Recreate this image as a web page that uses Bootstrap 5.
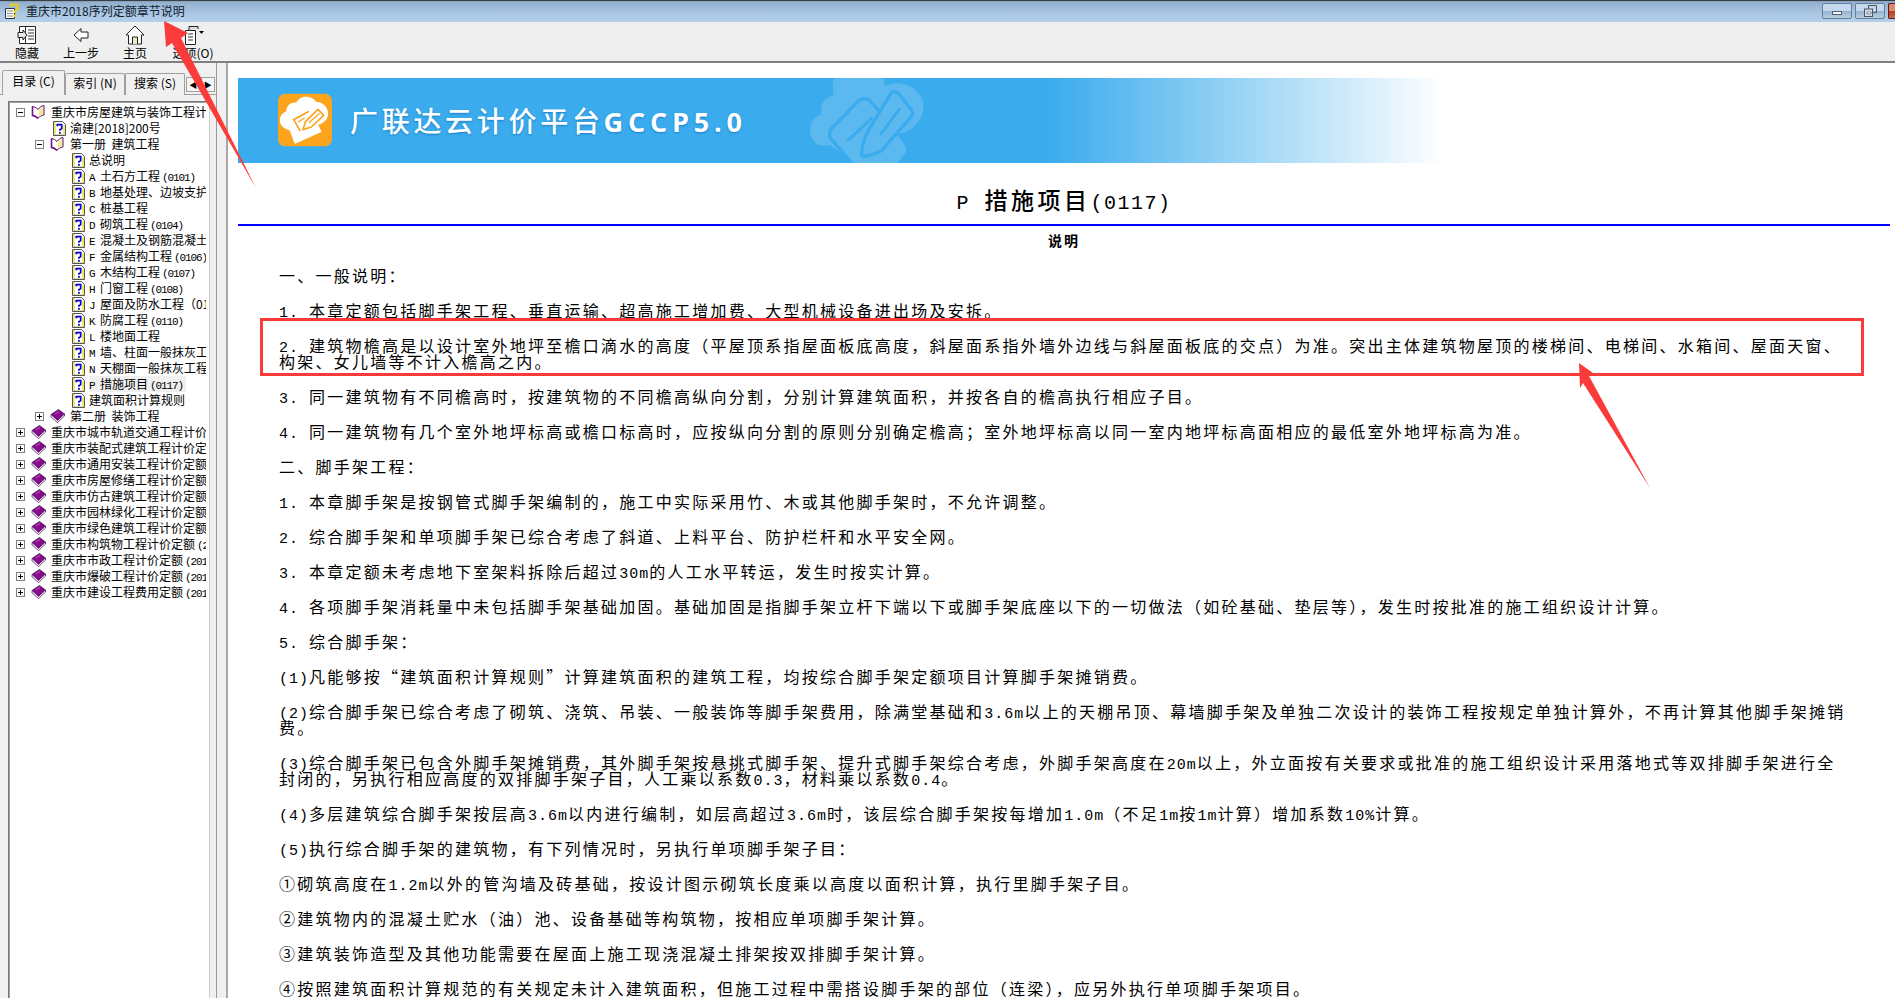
<!DOCTYPE html>
<html lang="zh-CN">
<head>
    <meta charset="UTF-8">
    <meta name="viewport" content="width=device-width, initial-scale=1.0">
    <title>重庆市2018序列定额章节说明</title>
    <link href="https://cdn.jsdelivr.net/npm/bootstrap@5.3.0/dist/css/bootstrap.min.css" rel="stylesheet">
    <style>
        html, body { height: 100%; overflow: hidden; }
        body {
            background: #fff;
            color: #000;
            font-family: "Noto Sans CJK SC", "Liberation Sans", sans-serif;
            font-size: 12px;
        }
        .help-win { width: 1895px; height: 998px; }

        /* title bar */
        .title-bar {
            height: 22px;
            background: linear-gradient(#8eaccb, #a9c6e3 60%, #b4d0ea);
            box-shadow: inset 0 2px 1px -1px #333;
        }
        .title-text { font-size: 12px; color: #14202c; margin-left: 7px; }
        .win-btn {
            width: 30px; height: 16px; margin-left: 3px;
            border: 1px solid #6a7d96; border-radius: 2px;
            background: linear-gradient(#c4d9ee 50%, #94b1cd 50%, #b6cfe6);
        }
        .win-btn.is-close {
            width: 7px;
            border-color: #5a1a1a;
            background: linear-gradient(#dd8a72 50%, #b8391c 50%, #cc6a50);
            border-right: 0; border-radius: 2px 0 0 2px;
        }
        .win-min { width: 10px; height: 4px; background: #f4f6f8; border: 1px solid #555e6c; }

        /* toolbar */
        .tool-bar {
            height: 41px;
            background: #efefef;
            border-bottom: 2px solid #7f7f7f;
        }
        .tool-item { width: 54px; line-height: 14px; padding-top: 3px; color: #000; }
        .tool-item svg { height: 20px; display: block; margin-bottom: 1px; }

        /* left pane */
        .side-pane { width: 226px; background: #f0f0f0; }
        .side-inner { width: 217px; padding-top: 7px; border-right: 1px solid #9a9a9a; }
        .side-tabs { padding-left: 2px; height: 25px; border-bottom: 1px solid #a0a0a0; flex-wrap: nowrap; }
        .side-tabs .nav-link {
            height: 22px; margin-top: 3px; padding: 1px 0 0; width: 60px;
            font-size: 12px; line-height: 15px; color: #000; text-align: center;
            background: #f0f0f0;
            border: 1px solid #a0a0a0; border-bottom: 0; border-radius: 2px 2px 0 0;
        }
        .side-tabs .nav-link.active { height: 25px; margin-top: 0; width: 63px; padding-top: 2px; background: #f0f0f0; border-color: #a0a0a0; }
        .tab-scroll { width: 29px; height: 15px; margin: 7px 0 0 1px; }
        .tab-scroll span {
            flex: 1; border: 1px solid #a0a0a0; background: #f4f4f4;
            font-size: 8px; line-height: 13px; text-align: center; color: #000;
        }
        .tree-box {
            margin: 6px 6px 0 8px;
            height: 900px;
            background: #fff;
            border: 1px solid #777;
            border-right-color: #ccc;
            box-shadow: inset 1px 1px 0 #a0a0a0;
            overflow: hidden;
            padding-top: 2px;
        }
        .tree-row { height: 16px; line-height: 16px; white-space: nowrap; overflow: hidden; display: flex; align-items: center; }
        .tree-row svg { flex: none; }
        .tree-row > span { overflow: hidden; min-width: 0; margin-right: 3px; }
        .lv0 { padding-left: 7px; }
        .lv1 { padding-left: 26px; }
        .leaf1 { padding-left: 44px; }
        .leaf2 { padding-left: 63px; }
        .pm-box { width: 9px; height: 9px; margin-right: 6px; }
        .ico-book { width: 15px; height: 14px; margin-right: 5px; }
        .ico-help { width: 13px; height: 15px; margin-right: 4px; }
        .tree-row > .tree-sel { background: #f0f0f0; padding-right: 3px; }
        .tl { font-family: "Liberation Mono", monospace; font-size: 11px; line-height: 0; white-space: pre; letter-spacing: -1.100px; }
        .tn { margin-left: 2px; }

        /* content */
        .doc-pane {
            flex: 1;
            min-width: 0;
            border-left: 2px solid #a8a8a8;
            padding: 15px 5px 0 10px;
            overflow: hidden;
        }
        .doc-banner {
            height: 85px;
            background: linear-gradient(90deg, #3aabec 0, #3aabec 49%, #ffffff 73%);
            overflow: hidden;
        }
        .banner-logo { width: 54px; height: 54px; margin: 15px 18px 0 40px; flex: none; }
        .banner-text {
            width: 460px; flex: none;
            margin-top: 22px;
            font-size: 28px; line-height: 40px; font-weight: 500;
            letter-spacing: 3.700px; color: #fff; white-space: nowrap;
            text-shadow: 0 1px 2px #1c7fc8;
        }
        .banner-text b { font-family: "Open Sans", sans-serif; font-weight: 700; font-size: 27px; letter-spacing: 4.800px; }
        .banner-mark { width: 130px; height: 85px; flex: none; }
        .doc-title {
            margin: 23px 0 0;
            height: 40px; line-height: 26px;
            border-bottom: 2px solid #0000ff;
            font-size: 23px; font-weight: 500; letter-spacing: 3.500px;
            text-align: center;
        }
        .doc-title span { font-family: "Liberation Mono", monospace; font-size: 20px; letter-spacing: 1.500px; line-height: 0; }
        .title-code { margin-right: 6px; }
        .doc-sub { margin: 6px 0 19px; font-size: 14px; line-height: 16px; font-weight: 700; letter-spacing: 2px; text-align: center; }
        .doc-body { padding-left: 41px; }
        .doc-body p {
            margin: 0 0 19px;
            font-size: 16px; line-height: 16px; letter-spacing: 2.250px;
            white-space: nowrap;
        }
        .doc-body i { font-style: normal; font-family: "Liberation Mono", monospace; font-size: 15px; line-height: 0; letter-spacing: 1px; white-space: pre; }

        .mark-layer { position: absolute; left: 0; top: 0; pointer-events: none; }
    </style>
</head>
<body>
<svg width="0" height="0" class="position-absolute">
    <symbol id="pm-plus" viewBox="0 0 9 9"><rect x=".5" y=".5" width="8" height="8" fill="#fff" stroke="#808080"/><path d="M2 4.500h5M4.500 2v5" stroke="#000"/></symbol>
    <symbol id="pm-minus" viewBox="0 0 9 9"><rect x=".5" y=".5" width="8" height="8" fill="#fff" stroke="#808080"/><path d="M2 4.500h5" stroke="#000"/></symbol>
    <symbol id="help" viewBox="0 0 13 15">
        <path d="M.5.5h9l3 3v11H.5z" fill="#fff" stroke="#555"/>
        <path d="M1 1h2v13H1z" fill="#f4e96a"/><path d="M10 4h2v10h-2z" fill="#f4e96a"/><path d="M1 13h11v1H1z" fill="#d8d8a0"/>
        <path d="M4.300 5.200V3.600h4.400v4L6.900 8.800v1" fill="none" stroke="#0000d0" stroke-width="1.700"/><path d="M6 11h1.800v1.800H6z" fill="#0000d0"/>
    </symbol>
    <symbol id="book-open" viewBox="0 0 15 14">
        <path d="M1.500 1.500c2 .3 4 1.300 5.500 3 1.500-2.200 3.500-3.500 6-4v9.500c-2.500.5-4.500 1.500-6 3-1.500-1.500-3.500-2.500-5.500-3z" fill="#fff" stroke="#5a0a6a"/>
        <path d="M8 5l4-3v7l-4 2.500z" fill="#f0e88a"/><path d="M1.500 1.500v9c2 .5 4 1.500 5.500 3" fill="none" stroke="#7b0f8b" stroke-width="1.600"/>
    </symbol>
    <symbol id="book" viewBox="0 0 15 14">
        <path d="M1 5.500L8.500.5l6 4.500-7 6.500z" fill="#8a0a8e" stroke="#3a0a4a" stroke-width=".7"/>
        <path d="M1 5.500l6.500 6 7-6.500v2l-7 6.500-6.500-5.500z" fill="#fff" stroke="#3a0a4a" stroke-width=".7"/>
        <path d="M5 5l4-2.500" stroke="#c060c0"/>
    </symbol>
</svg>

<div class="help-win position-relative d-flex flex-column">
    <div class="title-bar d-flex align-items-center flex-shrink-0">
        <svg width="16" height="17" viewBox="0 0 16 17" class="ms-1 flex-shrink-0" style="margin-right:-1px">
            <path d="M1.500 5.500h9v10h-9z" fill="#fff" stroke="#333"/><path d="M3 8h6M3 10.500h6M3 13h6" stroke="#888"/>
            <path d="M7 4V1.500h6.500v5L11 8v2" fill="none" stroke="#e6d21e" stroke-width="2.200"/><path d="M10 11.500h2.500V14H10z" fill="#e6d21e"/>
        </svg>
        <span class="title-text">重庆市2018序列定额章节说明</span>
        <div class="ms-auto d-flex align-items-center">
            <div class="win-btn d-flex align-items-center justify-content-center"><div class="win-min mt-1"></div></div>
            <div class="win-btn d-flex align-items-center justify-content-center">
                <svg width="13" height="12" viewBox="0 0 13 12"><path d="M4.500 3.500v-3h8v7h-3" fill="none" stroke="#4a5464"/><rect x=".5" y="4" width="8" height="7.500" fill="#d0deec" stroke="#4a5464"/><path d="M3 7h4v2H3z" fill="#fff" stroke="#4a5464" stroke-width=".6"/></svg>
            </div>
            <div class="win-btn is-close"></div>
        </div>
    </div>

    <div class="tool-bar d-flex flex-shrink-0">
        <div class="tool-item d-flex flex-column align-items-center">
            <svg width="20" height="20" viewBox="0 0 20 20"><path d="M2.500 1.500h16v17h-16z" fill="#fff" stroke="#222"/><path d="M8.500 1.500v17M11 5h6M11 8h6M11 11h6M11 14h6" stroke="#333"/><path d="M1 7.500h5V5l4 5-4 5v-2.500H1z" fill="#e8e8e8" stroke="#222"/></svg>
            <span>隐藏</span>
        </div>
        <div class="tool-item d-flex flex-column align-items-center">
            <svg width="20" height="20" viewBox="0 0 20 20"><path d="M3 10l7-6.500V7h7v6h-7v3.500z" fill="#fff" stroke="#222"/></svg>
            <span>上一步</span>
        </div>
        <div class="tool-item d-flex flex-column align-items-center">
            <svg width="20" height="20" viewBox="0 0 20 20"><path d="M10 1L1 10h2.500v9h13v-9H19z" fill="#fff" stroke="#222"/><path d="M7.500 19v-7h5v7" fill="#efe6c8" stroke="#222"/></svg>
            <span>主页</span>
        </div>
        <div class="tool-item d-flex flex-column align-items-center ms-1">
            <svg width="21" height="20" viewBox="0 0 21 20"><path d="M2.500 5.500h10v14h-10z" fill="#fff" stroke="#222"/><path d="M5 9h5M5 12h5M5 15h5" stroke="#333"/><path d="M6 5V1.500h9V4" fill="#ddd" stroke="#222"/><path d="M16 6h5l-2.500 3z" fill="#000"/></svg>
            <span>选项(O)</span>
        </div>
    </div>

    <div class="d-flex flex-grow-1" style="min-height:0">
        <div class="side-pane flex-shrink-0">
            <div class="side-inner h-100">
                <ul class="nav side-tabs">
                    <li class="nav-item"><a class="nav-link active" href="#">目录 (C)</a></li>
                    <li class="nav-item"><a class="nav-link" href="#">索引 (N)</a></li>
                    <li class="nav-item"><a class="nav-link" href="#">搜索 (S)</a></li>
                    <li class="tab-scroll d-flex"><span>◀</span><span>▶</span></li>
                </ul>
                <ul class="tree-box list-unstyled">
                    <li class="tree-row lv0"><svg class="pm-box"><use href="#pm-minus"/></svg><svg class="ico-book"><use href="#book-open"/></svg><span>重庆市房屋建筑与装饰工程计</span></li>
                    <li class="tree-row leaf1"><svg class="ico-help"><use href="#help"/></svg><span>渝建[2018]200号</span></li>
                    <li class="tree-row lv1"><svg class="pm-box"><use href="#pm-minus"/></svg><svg class="ico-book"><use href="#book-open"/></svg><span>第一册&nbsp;&nbsp;建筑工程</span></li>
                    <li class="tree-row leaf2"><svg class="ico-help"><use href="#help"/></svg><span>总说明</span></li>
                    <li class="tree-row leaf2"><svg class="ico-help"><use href="#help"/></svg><span><span class="tl">A </span>土石方工程<span class="tl tn">(0101)</span></span></li>
                    <li class="tree-row leaf2"><svg class="ico-help"><use href="#help"/></svg><span><span class="tl">B </span>地基处理、边坡支护</span></li>
                    <li class="tree-row leaf2"><svg class="ico-help"><use href="#help"/></svg><span><span class="tl">C </span>桩基工程</span></li>
                    <li class="tree-row leaf2"><svg class="ico-help"><use href="#help"/></svg><span><span class="tl">D </span>砌筑工程<span class="tl tn">(0104)</span></span></li>
                    <li class="tree-row leaf2"><svg class="ico-help"><use href="#help"/></svg><span><span class="tl">E </span>混凝土及钢筋混凝土</span></li>
                    <li class="tree-row leaf2"><svg class="ico-help"><use href="#help"/></svg><span><span class="tl">F </span>金属结构工程<span class="tl tn">(0106)</span></span></li>
                    <li class="tree-row leaf2"><svg class="ico-help"><use href="#help"/></svg><span><span class="tl">G </span>木结构工程<span class="tl tn">(0107)</span></span></li>
                    <li class="tree-row leaf2"><svg class="ico-help"><use href="#help"/></svg><span><span class="tl">H </span>门窗工程<span class="tl tn">(0108)</span></span></li>
                    <li class="tree-row leaf2"><svg class="ico-help"><use href="#help"/></svg><span><span class="tl">J </span>屋面及防水工程（01</span></li>
                    <li class="tree-row leaf2"><svg class="ico-help"><use href="#help"/></svg><span><span class="tl">K </span>防腐工程<span class="tl tn">(0110)</span></span></li>
                    <li class="tree-row leaf2"><svg class="ico-help"><use href="#help"/></svg><span><span class="tl">L </span>楼地面工程</span></li>
                    <li class="tree-row leaf2"><svg class="ico-help"><use href="#help"/></svg><span><span class="tl">M </span>墙、柱面一般抹灰工</span></li>
                    <li class="tree-row leaf2"><svg class="ico-help"><use href="#help"/></svg><span><span class="tl">N </span>天棚面一般抹灰工程</span></li>
                    <li class="tree-row leaf2"><svg class="ico-help"><use href="#help"/></svg><span class="tree-sel"><span class="tl">P </span>措施项目<span class="tl tn">(0117)</span></span></li>
                    <li class="tree-row leaf2"><svg class="ico-help"><use href="#help"/></svg><span>建筑面积计算规则</span></li>
                    <li class="tree-row lv1"><svg class="pm-box"><use href="#pm-plus"/></svg><svg class="ico-book"><use href="#book"/></svg><span>第二册&nbsp;&nbsp;装饰工程</span></li>
                    <li class="tree-row lv0"><svg class="pm-box"><use href="#pm-plus"/></svg><svg class="ico-book"><use href="#book"/></svg><span>重庆市城市轨道交通工程计价</span></li>
                    <li class="tree-row lv0"><svg class="pm-box"><use href="#pm-plus"/></svg><svg class="ico-book"><use href="#book"/></svg><span>重庆市装配式建筑工程计价定</span></li>
                    <li class="tree-row lv0"><svg class="pm-box"><use href="#pm-plus"/></svg><svg class="ico-book"><use href="#book"/></svg><span>重庆市通用安装工程计价定额</span></li>
                    <li class="tree-row lv0"><svg class="pm-box"><use href="#pm-plus"/></svg><svg class="ico-book"><use href="#book"/></svg><span>重庆市房屋修缮工程计价定额</span></li>
                    <li class="tree-row lv0"><svg class="pm-box"><use href="#pm-plus"/></svg><svg class="ico-book"><use href="#book"/></svg><span>重庆市仿古建筑工程计价定额</span></li>
                    <li class="tree-row lv0"><svg class="pm-box"><use href="#pm-plus"/></svg><svg class="ico-book"><use href="#book"/></svg><span>重庆市园林绿化工程计价定额</span></li>
                    <li class="tree-row lv0"><svg class="pm-box"><use href="#pm-plus"/></svg><svg class="ico-book"><use href="#book"/></svg><span>重庆市绿色建筑工程计价定额</span></li>
                    <li class="tree-row lv0"><svg class="pm-box"><use href="#pm-plus"/></svg><svg class="ico-book"><use href="#book"/></svg><span>重庆市构筑物工程计价定额<span class="tl tn">(2</span></span></li>
                    <li class="tree-row lv0"><svg class="pm-box"><use href="#pm-plus"/></svg><svg class="ico-book"><use href="#book"/></svg><span>重庆市市政工程计价定额<span class="tl tn">(201</span></span></li>
                    <li class="tree-row lv0"><svg class="pm-box"><use href="#pm-plus"/></svg><svg class="ico-book"><use href="#book"/></svg><span>重庆市爆破工程计价定额<span class="tl tn">(201</span></span></li>
                    <li class="tree-row lv0"><svg class="pm-box"><use href="#pm-plus"/></svg><svg class="ico-book"><use href="#book"/></svg><span>重庆市建设工程费用定额<span class="tl tn">(201</span></span></li>
                </ul>
            </div>
        </div>

        <div class="doc-pane">
            <div class="doc-banner d-flex">
                <svg class="banner-logo" viewBox="25 25 162 158">
                    <rect x="25" y="25" width="162" height="158" rx="22" fill="#fca41e"/>
                    <path d="M60 135C40 130 25 115 32 95c4-10 13-15 18-17 0-18 15-28 30-26 10-22 45-24 60-2 20-2 38 20 35 40-3 18-20 28-35 30z" fill="#fff"/>
                    <path d="M50 100l70-30 32 68-75 34z" fill="#fff" stroke="#fff" stroke-width="6" stroke-linejoin="round"/>
                    <path d="M92 137L72 103l46-25" fill="none" stroke="#fca41e" stroke-width="5"/>
                    <path d="M85 110l20-12" stroke="#fca41e" stroke-width="4"/>
                    <path d="M100 133l8-25 37-36 17 18-37 35z" fill="#fff" stroke="#fca41e" stroke-width="5" stroke-linejoin="round"/>
                    <path d="M118 112l32-28" stroke="#fca41e" stroke-width="4"/>
                </svg>
                <div class="banner-text">广联达云计价平台<b>GCCP5.0</b></div>
                <svg class="banner-mark" viewBox="0 9 390 255">
                    <path d="M75 0C65 30 68 50 72 60 45 65 28 90 35 118 10 125-5 150 2 180c6 25 28 38 58 30l35 25 40 41h120l30-41c7-10 3-20-5-30l-25-35 20 5c45-15 70-50 65-90-10-45-60-75-115-53L218 0z" fill="#5cb9f0"/>
                    <path d="M205 105l-25-27c-10-10-25-10-35 0L65 160c-10 12-7 20-3 30l68 80" fill="none" stroke="#3aabec" stroke-width="10" stroke-linecap="round"/>
                    <path d="M115 195l70-65" stroke="#3aabec" stroke-width="9" stroke-linecap="round"/>
                    <path d="M240 60c5-12 18-12 25-5l40 50c5 10 3 15-5 25l-75 85c-10 17-35 25-65 30l-5-5c0-25 10-60 30-90z" fill="#5cb9f0" stroke="#3aabec" stroke-width="10" stroke-linejoin="round"/>
                    <path d="M270 100l-60 80" stroke="#3aabec" stroke-width="8"/>
                </svg>
            </div>

            <h1 class="doc-title"><span class="title-code">P</span> 措施项目<span>(0117)</span></h1>
            <div class="doc-sub">说明</div>

            <div class="doc-body">
                <p>一、一般说明：</p>
                <p><i>1. </i>本章定额包括脚手架工程、垂直运输、超高施工增加费、大型机械设备进出场及安拆。</p>
                <p><i>2. </i>建筑物檐高是以设计室外地坪至檐口滴水的高度（平屋顶系指屋面板底高度，斜屋面系指外墙外边线与斜屋面板底的交点）为准。突出主体建筑物屋顶的楼梯间、电梯间、水箱间、屋面天窗、<br>构架、女儿墙等不计入檐高之内。</p>
                <p><i>3. </i>同一建筑物有不同檐高时，按建筑物的不同檐高纵向分割，分别计算建筑面积，并按各自的檐高执行相应子目。</p>
                <p><i>4. </i>同一建筑物有几个室外地坪标高或檐口标高时，应按纵向分割的原则分别确定檐高；室外地坪标高以同一室内地坪标高面相应的最低室外地坪标高为准。</p>
                <p>二、脚手架工程：</p>
                <p><i>1. </i>本章脚手架是按钢管式脚手架编制的，施工中实际采用竹、木或其他脚手架时，不允许调整。</p>
                <p><i>2. </i>综合脚手架和单项脚手架已综合考虑了斜道、上料平台、防护栏杆和水平安全网。</p>
                <p><i>3. </i>本章定额未考虑地下室架料拆除后超过<i>30m</i>的人工水平转运，发生时按实计算。</p>
                <p><i>4. </i>各项脚手架消耗量中未包括脚手架基础加固。基础加固是指脚手架立杆下端以下或脚手架底座以下的一切做法（如砼基础、垫层等），发生时按批准的施工组织设计计算。</p>
                <p><i>5. </i>综合脚手架：</p>
                <p><i>(1)</i>凡能够按“建筑面积计算规则”计算建筑面积的建筑工程，均按综合脚手架定额项目计算脚手架摊销费。</p>
                <p><i>(2)</i>综合脚手架已综合考虑了砌筑、浇筑、吊装、一般装饰等脚手架费用，除满堂基础和<i>3.6m</i>以上的天棚吊顶、幕墙脚手架及单独二次设计的装饰工程按规定单独计算外，不再计算其他脚手架摊销<br>费。</p>
                <p><i>(3)</i>综合脚手架已包含外脚手架摊销费，其外脚手架按悬挑式脚手架、提升式脚手架综合考虑，外脚手架高度在<i>20m</i>以上，外立面按有关要求或批准的施工组织设计采用落地式等双排脚手架进行全<br>封闭的，另执行相应高度的双排脚手架子目，人工乘以系数<i>0.3</i>，材料乘以系数<i>0.4</i>。</p>
                <p><i>(4)</i>多层建筑综合脚手架按层高<i>3.6m</i>以内进行编制，如层高超过<i>3.6m</i>时，该层综合脚手架按每增加<i>1.0m</i>（不足<i>1m</i>按<i>1m</i>计算）增加系数<i>10%</i>计算。</p>
                <p><i>(5)</i>执行综合脚手架的建筑物，有下列情况时，另执行单项脚手架子目：</p>
                <p>①砌筑高度在<i>1.2m</i>以外的管沟墙及砖基础，按设计图示砌筑长度乘以高度以面积计算，执行里脚手架子目。</p>
                <p>②建筑物内的混凝土贮水（油）池、设备基础等构筑物，按相应单项脚手架计算。</p>
                <p>③建筑装饰造型及其他功能需要在屋面上施工现浇混凝土排架按双排脚手架计算。</p>
                <p>④按照建筑面积计算规范的有关规定未计入建筑面积，但施工过程中需搭设脚手架的部位（连梁），应另外执行单项脚手架项目。</p>
            </div>
        </div>
    </div>

    <!-- red annotations drawn on top of the screenshot -->
    <svg class="mark-layer" width="1895" height="998" viewBox="0 0 1895 998">
        <rect x="261.500" y="319.500" width="1601" height="55" fill="none" stroke="#fb3a3a" stroke-width="3"/>
        <path d="M164 21l24 12-7 5 75 150-84-145-6 4z" fill="#fb3a3a"/>
        <path d="M1579 363l14 10-4 3 61 112-67-105-3 5z" fill="#fb3a3a"/>
    </svg>
</div>
<script src="https://cdn.jsdelivr.net/npm/bootstrap@5.3.0/dist/js/bootstrap.bundle.min.js"></script>
</body>
</html>
